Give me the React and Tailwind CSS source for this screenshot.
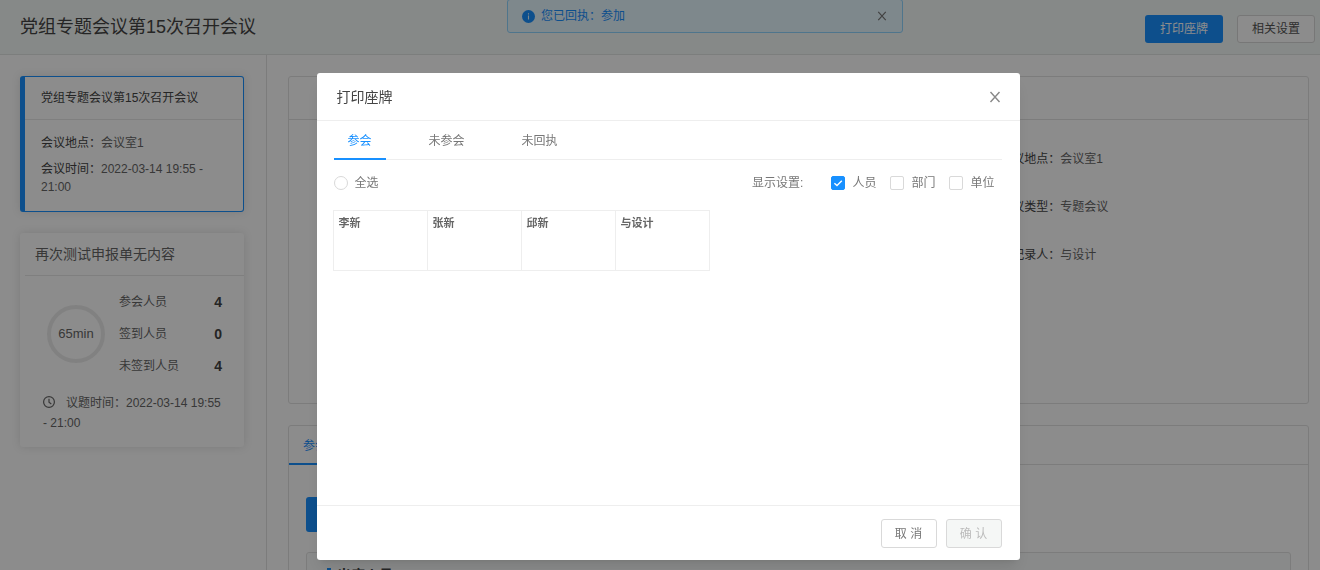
import { useState } from 'react';

const infoRows = [
  { label: '会议地点', value: '会议室1' },
  { label: '会议类型', value: '专题会议' },
  { label: '记录人', value: '与设计' },
];

const counts = [
  { label: '参会人员', value: 4 },
  { label: '签到人员', value: 0 },
  { label: '未签到人员', value: 4 },
];

const tabs = ['参会', '未参会', '未回执'];
const people = ['李新', '张新', '邱新', '与设计'];
const displayOptions = ['人员', '部门', '单位'];

function CloseIcon({ className }) {
  return (
    <svg className={className} viewBox="0 0 12 12" fill="none" stroke="currentColor" strokeWidth="1.4">
      <path d="M1.5 1L10.5 11M10.5 1L1.5 11" />
    </svg>
  );
}

function ClockIcon() {
  return (
    <svg className="inline-block w-3 h-3 mr-[11px] align-[-1px]" viewBox="0 0 12 12" fill="none" stroke="currentColor" strokeWidth="1.2">
      <circle cx="6" cy="6" r="5.4" />
      <path d="M6 2.8V6.3L8.3 8" />
    </svg>
  );
}

function Header() {
  return (
    <header className="relative shrink-0 flex items-center justify-between h-[55px] pl-5 pr-[5px] border-b border-[#e2e5e3] bg-[#f5faf7]">
      <h1 className="text-[18px] text-[#444]">党组专题会议第15次召开会议</h1>
      <div className="absolute -top-px left-[507px] w-[396px] h-[34px] flex items-center pl-[14px] pr-[15px] rounded-[3px] border border-[#91d5ff] bg-[#e6f7ff] text-[#1890ff]">
        <svg className="w-[13px] h-[13px] mr-[6px]" viewBox="0 0 13 13">
          <circle cx="6.5" cy="6.5" r="6.5" fill="currentColor" />
          <path d="M6.5 5.6V9.6M6.5 3.2V4.5" stroke="#e6f7ff" strokeWidth="1.1" />
        </svg>
        <span className="flex-1">您已回执：参加</span>
        <button type="button" aria-label="关闭提示" className="text-[#777]">
          <CloseIcon className="w-[10px] h-[10px]" />
        </button>
      </div>
      <div className="flex gap-[14px] pt-[3px]">
        <button type="button" className="h-7 w-[78px] rounded-[3px] bg-[#1890ff] text-white">打印座牌</button>
        <button type="button" className="h-7 w-[78px] rounded-[3px] border border-[#d9d9d9] bg-white text-[#555]">相关设置</button>
      </div>
    </header>
  );
}

function Sidebar() {
  return (
    <aside className="w-[267px] shrink-0 flex flex-col gap-[21px] py-[21px] pl-5 pr-[22px] border-r border-[#e2e2e2]">
      <section className="h-[136px] rounded-[3px] border border-l-[5px] border-[#1890ff] shadow-[0_0_10px_rgba(0,0,0,0.12)]">
        <h2 className="h-[43px] pl-4 flex items-center border-b border-[#e8e8e8] text-[#444]">党组专题会议第15次召开会议</h2>
        <div className="pt-[14px] pl-4 pr-6 text-[#666]">
          <p className="leading-[18px]">
            <span className="text-[#444]">会议地点：</span>会议室1
          </p>
          <p className="mt-2 leading-[18px]">
            <span className="text-[#444]">会议时间：</span>2022-03-14 19:55 - 21:00
          </p>
        </div>
      </section>
      <section className="h-[214px] rounded-[3px] shadow-[0_0_10px_rgba(0,0,0,0.12)] text-[#666]">
        <h2 className="h-[43px] ml-[5px] pl-[10px] flex items-center border-b border-[#e8e8e8] text-sm">再次测试申报单无内容</h2>
        <div className="flex items-center pt-[10px] pl-[27px] pr-[22px]">
          <div className="w-[58px] h-[58px] shrink-0 flex items-center justify-center rounded-full border-4 border-[#ececec] text-[13px]">65min</div>
          <dl className="flex-1 ml-[14px]">
            {counts.map((item) => (
              <div key={item.label} className="flex items-center justify-between h-8">
                <dt>{item.label}</dt>
                <dd className="text-sm font-bold text-[#444]">{item.value}</dd>
              </div>
            ))}
          </dl>
        </div>
        <p className="mt-[11px] pl-[23px] pr-[18px] leading-5">
          <ClockIcon />
          议题时间：2022-03-14 19:55 - 21:00
        </p>
      </section>
    </aside>
  );
}

function Content() {
  return (
    <main className="flex-1 flex flex-col gap-[21px] py-[21px] pl-[21px] pr-[11px]">
      <section className="h-[328px] shrink-0 rounded-[3px] border border-[#e2e2e2]">
        <div className="h-[43px] border-b border-[#e2e2e2]" />
        <dl className="grid grid-cols-3 gap-y-[30px] pt-[30px]">
          {infoRows.map((row) => (
            <div key={row.label} className="col-start-3 flex leading-[18px]">
              <dt className="w-[92px] text-right text-[#444]">{row.label}：</dt>
              <dd className="text-[#666]">{row.value}</dd>
            </div>
          ))}
        </dl>
      </section>
      <section className="rounded-[3px] border border-[#e2e2e2]">
        <div className="flex h-[39px] border-b border-[#e2e2e2]">
          <button type="button" className="h-[39px] px-[14px] pt-[3px] border-b-2 border-[#1890ff] text-[#1890ff]">参会</button>
        </div>
        <div className="pt-8 px-[17px]">
          <div className="w-20 h-[35px] rounded-[3px] bg-[#1890ff]" />
          <div className="mt-5 rounded-[3px] border border-[#e2e2e2] bg-[#fafcfb]">
            <h3 className="flex items-center h-11 pl-5 text-sm font-bold text-[#444]">
              <span className="w-1 h-[14px] mr-[6px] bg-[#1890ff]" />
              出席人员
            </h3>
          </div>
        </div>
      </section>
    </main>
  );
}

function PrintDialog() {
  const [activeTab, setActiveTab] = useState('参会');
  const [shown, setShown] = useState(['人员']);

  const toggleOption = (option) => {
    setShown(shown.includes(option) ? shown.filter((o) => o !== option) : [...shown, option]);
  };

  return (
    <div className="fixed inset-0 flex items-start justify-center pt-[73px] pl-4 bg-black/45">
      <div role="dialog" aria-labelledby="dialog-title" className="w-full max-w-[703px] rounded-[3px] bg-white shadow-lg text-[#777]">
        <div className="flex items-center justify-between h-12 pl-5 pr-[19px] border-b border-[#eee]">
          <h2 id="dialog-title" className="text-sm text-[#444]">打印座牌</h2>
          <button type="button" aria-label="关闭" className="text-[#888]">
            <CloseIcon className="w-3 h-3" />
          </button>
        </div>

        <div className="min-h-[384px] pl-[17px] pr-[18px]">
          <div role="tablist" className="flex gap-[29px] h-[39px] border-b border-[#eee]">
            {tabs.map((tab) => (
              <button
                key={tab}
                type="button"
                role="tab"
                aria-selected={activeTab === tab}
                onClick={() => setActiveTab(tab)}
                className={`h-[39px] px-[14px] pt-[3px] border-b-2 ${
                  activeTab === tab ? 'border-[#1890ff] text-[#1890ff]' : 'border-transparent'
                }`}
              >
                {tab}
              </button>
            ))}
          </div>

          <div className="flex items-center justify-between h-[46px] mb-1 pr-[7px]">
            <label className="flex items-center gap-[7px]">
              <input type="radio" name="all" className="appearance-none w-[14px] h-[14px] rounded-full border border-[#d9d9d9] checked:border-4 checked:border-[#1890ff]" />
              全选
            </label>
            <div className="flex items-center gap-[14px]">
              <span className="mr-[14px]">显示设置:</span>
              {displayOptions.map((option) => (
                <label key={option} className="flex items-center gap-[7px]">
                  <span className="relative flex">
                    <input
                      type="checkbox"
                      checked={shown.includes(option)}
                      onChange={() => toggleOption(option)}
                      className="peer appearance-none w-[14px] h-[14px] rounded-[2px] border border-[#d9d9d9] checked:border-[#1890ff] checked:bg-[#1890ff]"
                    />
                    <svg className="absolute inset-0 w-[14px] h-[14px] hidden peer-checked:block pointer-events-none" viewBox="0 0 14 14" fill="none" stroke="#fff" strokeWidth="1.4">
                      <path d="M3.4 7.2L6 9.6L10.8 4.8" />
                    </svg>
                  </span>
                  {option}
                </label>
              ))}
            </div>
          </div>

          <ul className="flex flex-wrap -ml-px border-l border-[#eee]">
            {people.map((name) => (
              <li key={name} className="w-[94px] h-[61px] pt-1 pl-[5px] border border-l-0 border-[#eee] text-[11px] leading-4 font-bold text-[#666]">
                {name}
              </li>
            ))}
          </ul>
        </div>

        <div className="flex justify-end gap-[9px] pt-[13px] pb-3 pr-[18px] border-t border-[#eee]">
          <button type="button" className="h-[29px] w-14 rounded-[3px] border border-[#d9d9d9]">取 消</button>
          <button type="button" disabled className="h-[29px] w-14 rounded-[3px] border border-[#d9d9d9] bg-[#f5f7f6] text-[#bbb]">确 认</button>
        </div>
      </div>
    </div>
  );
}

export default function App() {
  return (
    <div className="h-screen flex flex-col overflow-hidden bg-white font-['Liberation_Sans','Noto_Sans_CJK_SC',sans-serif] text-xs">
      <Header />
      <div className="flex flex-1">
        <Sidebar />
        <Content />
      </div>
      <PrintDialog />
    </div>
  );
}
